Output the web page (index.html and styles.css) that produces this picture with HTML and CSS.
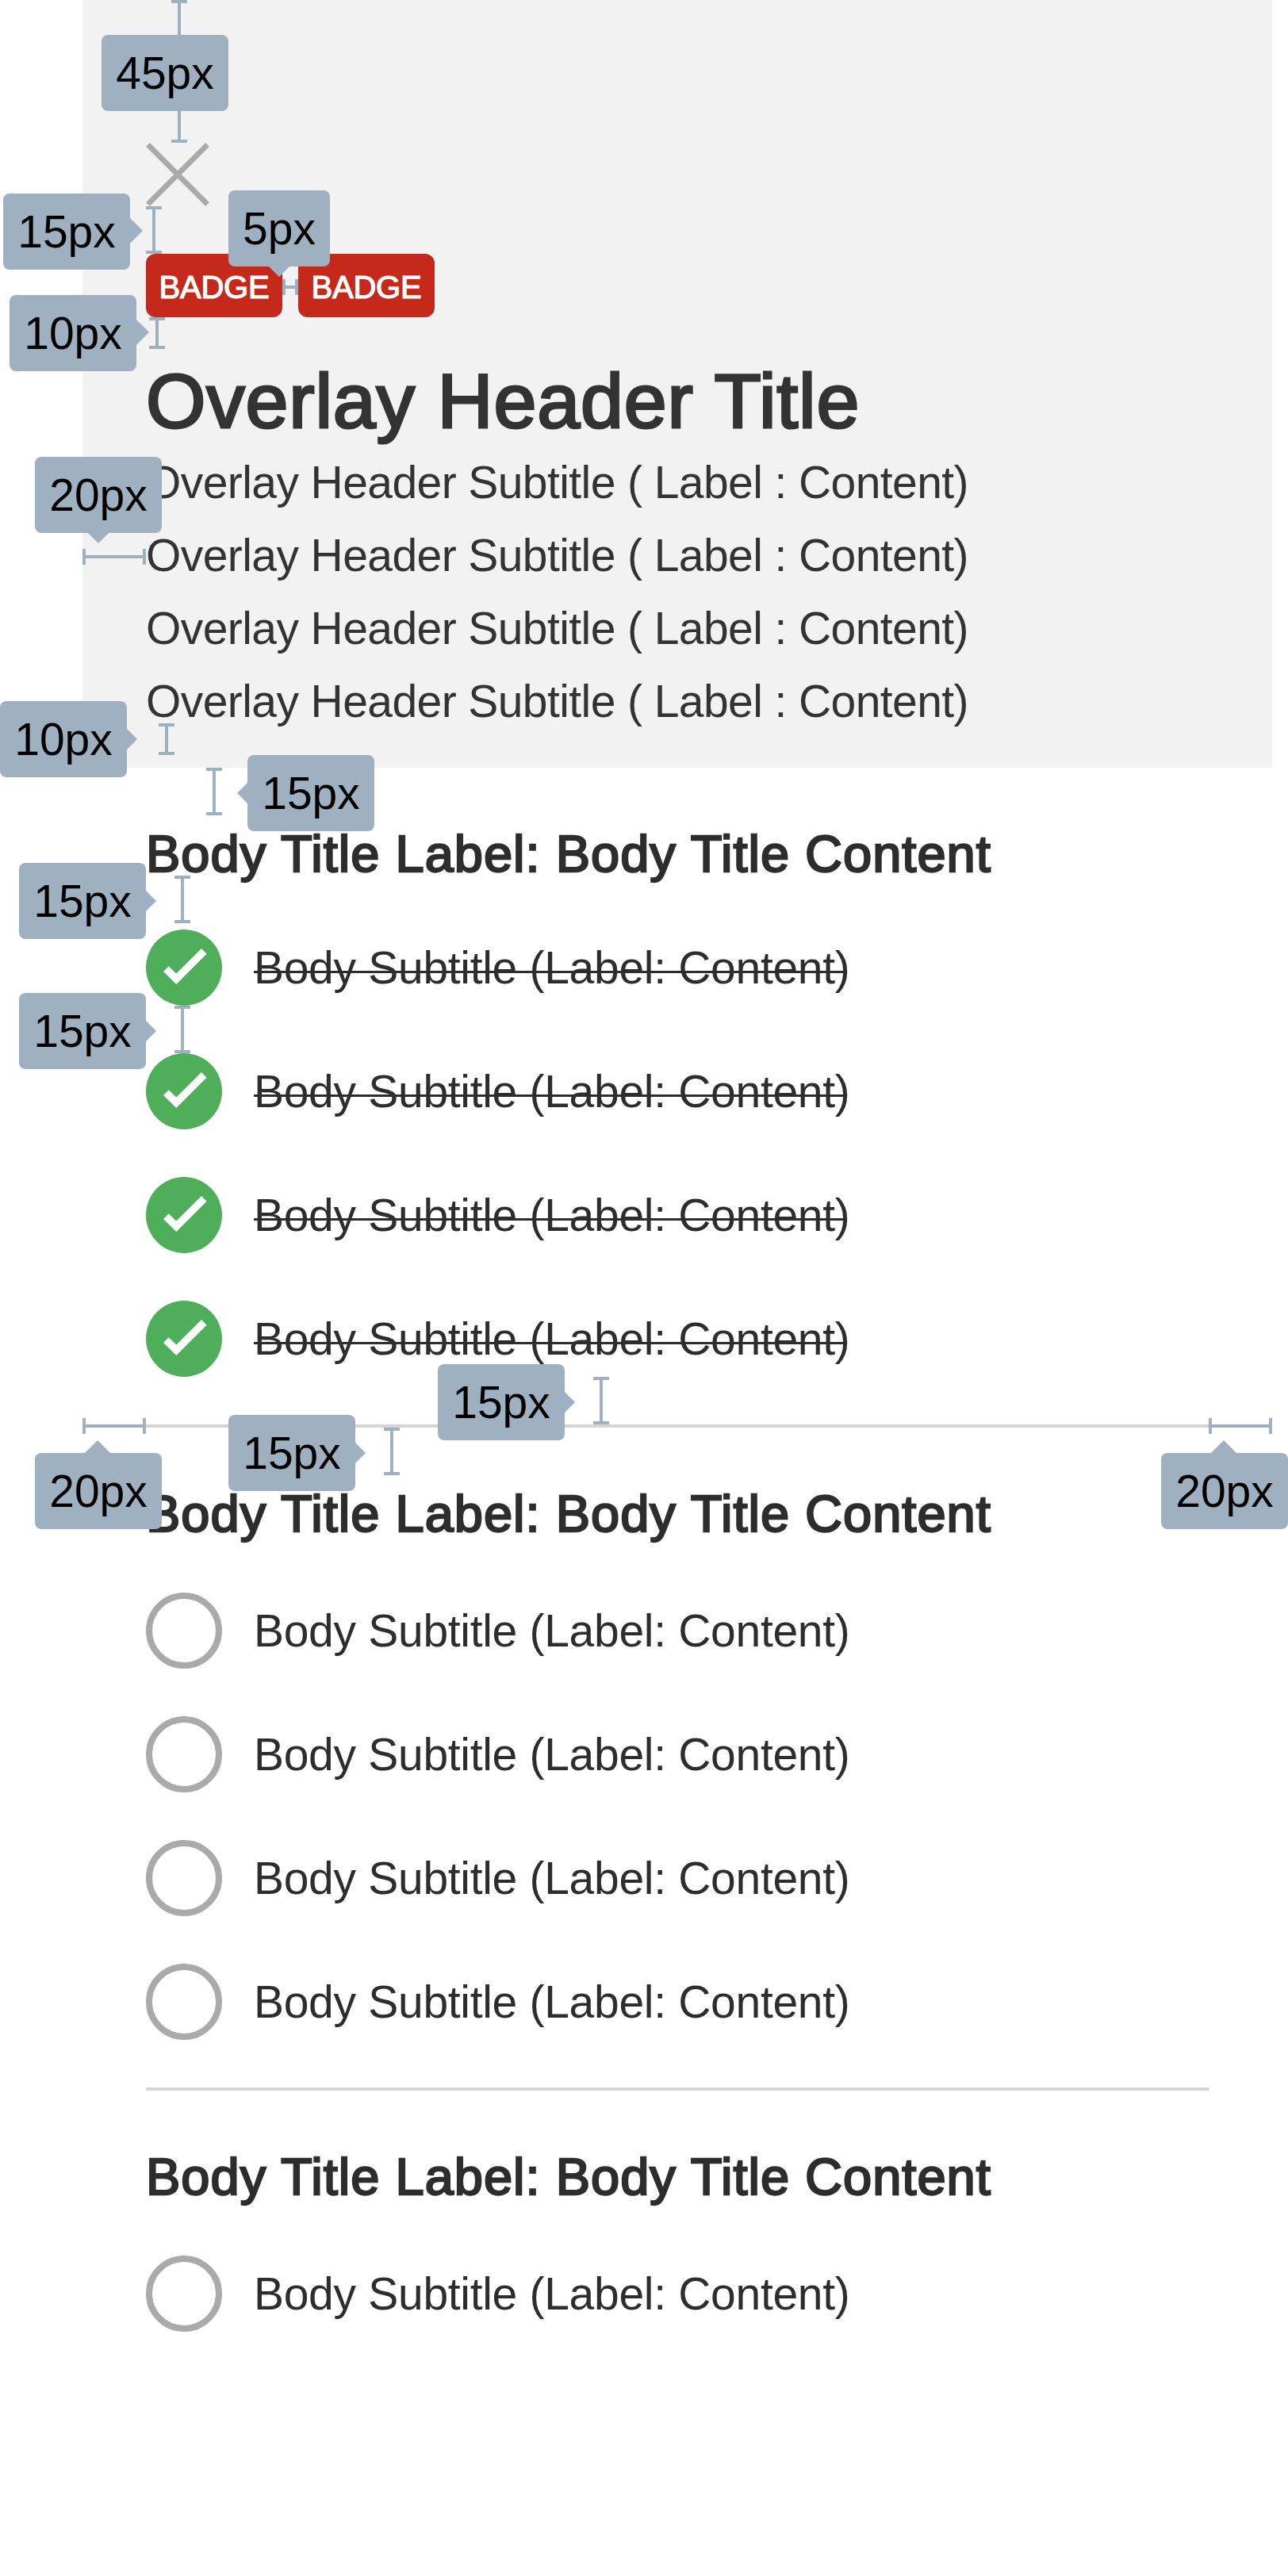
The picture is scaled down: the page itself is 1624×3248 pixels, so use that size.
FILE: index.html
```
<!DOCTYPE html>
<html lang="en">
<head>
<meta charset="utf-8">
<title>Overlay spacing</title>
<link rel="stylesheet" href="styles.css">
</head>
<body>
<main class="overlay">
  <header class="header">
    <svg class="close" viewBox="0 0 80 80"><path d="M2.4 2.4 77.6 77.6M77.6 2.4 2.4 77.6"/></svg>
    <div class="badges"><span class="badge">BADGE</span><span class="badge">BADGE</span></div>
    <h1 class="title">Overlay Header Title</h1>
    <div class="subtitles">
      <p>Overlay Header Subtitle ( Label : Content)</p>
      <p>Overlay Header Subtitle ( Label : Content)</p>
      <p>Overlay Header Subtitle ( Label : Content)</p>
      <p>Overlay Header Subtitle ( Label : Content)</p>
    </div>
  </header>

  <section class="section section-done">
    <h2 class="section-title">Body Title Label: Body Title Content</h2>
    <ul class="items">
      <li class="item done"><svg class="mark" viewBox="0 0 96 96"><circle cx="48" cy="48" r="48"/><path d="M70 24 76.6 30.7 38.3 69 22 52.9 28.7 46.3 38.3 55.6Z"/></svg><span class="text">Body Subtitle (Label: Content)</span></li>
      <li class="item done"><svg class="mark" viewBox="0 0 96 96"><circle cx="48" cy="48" r="48"/><path d="M70 24 76.6 30.7 38.3 69 22 52.9 28.7 46.3 38.3 55.6Z"/></svg><span class="text">Body Subtitle (Label: Content)</span></li>
      <li class="item done"><svg class="mark" viewBox="0 0 96 96"><circle cx="48" cy="48" r="48"/><path d="M70 24 76.6 30.7 38.3 69 22 52.9 28.7 46.3 38.3 55.6Z"/></svg><span class="text">Body Subtitle (Label: Content)</span></li>
      <li class="item done"><svg class="mark" viewBox="0 0 96 96"><circle cx="48" cy="48" r="48"/><path d="M70 24 76.6 30.7 38.3 69 22 52.9 28.7 46.3 38.3 55.6Z"/></svg><span class="text">Body Subtitle (Label: Content)</span></li>
    </ul>
  </section>

  <section class="section">
    <h2 class="section-title">Body Title Label: Body Title Content</h2>
    <ul class="items">
      <li class="item"><span class="ring"></span><span class="text">Body Subtitle (Label: Content)</span></li>
      <li class="item"><span class="ring"></span><span class="text">Body Subtitle (Label: Content)</span></li>
      <li class="item"><span class="ring"></span><span class="text">Body Subtitle (Label: Content)</span></li>
      <li class="item"><span class="ring"></span><span class="text">Body Subtitle (Label: Content)</span></li>
    </ul>
  </section>

  <section class="section">
    <h2 class="section-title">Body Title Label: Body Title Content</h2>
    <ul class="items">
      <li class="item"><span class="ring"></span><span class="text">Body Subtitle (Label: Content)</span></li>
    </ul>
  </section>
</main>

<!-- Spacing callouts laid over the overlay -->
<div class="rule v r-top"></div>
<div class="rule v r-close"></div>
<div class="rule h r-badge-gap"></div>
<div class="rule v r-badge"></div>
<div class="rule h r-header-side"></div>
<div class="rule v r-header-end"></div>
<div class="rule v r-body-top"></div>
<div class="rule v r-body-title"></div>
<div class="rule v r-item"></div>
<div class="rule v r-before-line"></div>
<div class="rule v r-after-line"></div>
<div class="rule h r-line-left"></div>
<div class="rule h r-line-right"></div>

<div class="tag t-top">45px</div>
<div class="tag right big t-close">15px</div>
<div class="tag down short t-badge-gap">5px</div>
<div class="tag right big t-badge">10px</div>
<div class="tag down t-header-side">20px</div>
<div class="tag right t-header-end">10px</div>
<div class="tag left t-body-top">15px</div>
<div class="tag right t-body-title">15px</div>
<div class="tag right t-item">15px</div>
<div class="tag right t-before-line">15px</div>
<div class="tag right t-after-line">15px</div>
<div class="tag up big t-line-left">20px</div>
<div class="tag up big t-line-right">20px</div>
</body>
</html>
```
FILE: styles.css
```
* { box-sizing: border-box; margin: 0; padding: 0; }

body {
  position: relative;
  width: 1624px;
  height: 3248px;
  overflow: hidden;
  background: #fff;
  color: #2d2d2d;
  font-family: "Liberation Sans", Arial, sans-serif;
}

.overlay { width: 1500px; margin-left: 104px; }

.header {
  height: 968px;
  padding: 180px 80px 0;
  background: #f2f2f2;
  color: #333;
}

.close { display: block; width: 80px; height: 80px; fill: none; stroke: #aaa; stroke-width: 6.8; }

.badges { display: flex; gap: 20px; margin-top: 60px; }

.badge {
  width: 172px;
  height: 80px;
  border-radius: 12px;
  background: #c5291b;
  color: #fff;
  font-size: 40px;
  line-height: 84px;
  letter-spacing: -0.2px;
  text-align: center;
  -webkit-text-stroke: 1.2px #fff;
}

.title {
  margin-top: 52px;
  font-size: 97px;
  font-weight: 400;
  line-height: 108px;
  letter-spacing: 0.8px;
  white-space: nowrap;
  -webkit-text-stroke: 3px #333;
}

.subtitles { margin-top: 2px; font-size: 57px; line-height: 92px; letter-spacing: -0.58px; white-space: nowrap; }

.section { margin: 0 80px; padding: 69px 0 60px; border-bottom: 4px solid #d4d4d4; }
.section:last-child { border-bottom: 0; }

.section-title {
  font-size: 65px;
  font-weight: 400;
  line-height: 80px;
  letter-spacing: 1px;
  white-space: nowrap;
  -webkit-text-stroke: 2.4px #2d2d2d;
}

.items { display: flex; flex-direction: column; gap: 60px; margin-top: 59px; list-style: none; }
.section-done .items { margin-top: 55px; }

.item { display: flex; gap: 40px; height: 96px; font-size: 57px; line-height: 96px; letter-spacing: -0.3px; white-space: nowrap; }
.mark { width: 96px; height: 96px; fill: #4fae5a; }
.mark path { fill: #fff; }
.ring { width: 96px; height: 96px; border: 8px solid #aaa; border-radius: 50%; }

.done .text { position: relative; }
.done .text::after { content: ""; position: absolute; left: 0; right: 3px; top: 52px; height: 3px; background: #2d2d2d; }

/* Measuring rules */
.rule { position: absolute; }
.rule::before { content: ""; position: absolute; background: #9fb1c1; }
.v { width: 20px; border: solid #9fb1c1; border-width: 4px 0; }
.v::before { left: 8px; top: 0; bottom: 0; width: 4px; }
.h { height: 20px; border: solid #9fb1c1; border-width: 0 4px; }
.h::before { left: 0; right: 0; top: 8px; height: 4px; }

.r-top { left: 216px; top: 0; height: 180px; }
.r-close { left: 184px; top: 260px; height: 60px; }
.r-badge-gap { left: 356px; top: 352px; width: 20px; }
.r-badge { left: 188px; top: 400px; height: 40px; }
.r-header-side { left: 104px; top: 692px; width: 80px; }
.r-header-end { left: 200px; top: 912px; height: 40px; }
.r-body-top { left: 260px; top: 968px; height: 60px; }
.r-body-title { left: 220px; top: 1104px; height: 60px; }
.r-item { left: 220px; top: 1268px; height: 60px; }
.r-before-line { left: 748px; top: 1736px; height: 60px; }
.r-after-line { left: 484px; top: 1800px; height: 60px; }
.r-line-left { left: 104px; top: 1788px; width: 80px; }
.r-line-right { left: 1524px; top: 1788px; width: 80px; }

/* Value tags */
.tag {
  --tip: 13px;
  position: absolute;
  width: 160px;
  height: 96px;
  border-radius: 8px;
  background: #9fb1c1;
  color: #000;
  font-size: 57px;
  line-height: 96px;
  text-align: center;
}
.short { width: 128px; }
.big { --tip: 16.6px; }
.tag::after { position: absolute; border: var(--tip) solid transparent; }
.right::after { content: ""; left: 100%; top: calc(50% - var(--tip)); border-right: 0; border-left-color: #9fb1c1; }
.left::after { content: ""; right: 100%; top: calc(50% - var(--tip)); border-left: 0; border-right-color: #9fb1c1; }
.down::after { content: ""; top: 100%; left: calc(50% - var(--tip)); border-bottom: 0; border-top-color: #9fb1c1; }
.up::after { content: ""; bottom: 100%; left: calc(50% - var(--tip)); border-top: 0; border-bottom-color: #9fb1c1; }

.t-top { left: 128px; top: 44px; }
.t-close { left: 4px; top: 244px; }
.t-badge-gap { left: 288px; top: 240px; }
.t-badge { left: 12px; top: 372px; }
.t-header-side { left: 44px; top: 576px; }
.t-header-end { left: 0; top: 884px; }
.t-body-top { left: 312px; top: 952px; }
.t-body-title { left: 24px; top: 1088px; }
.t-item { left: 24px; top: 1252px; }
.t-before-line { left: 552px; top: 1720px; }
.t-after-line { left: 288px; top: 1784px; }
.t-line-left { left: 44px; top: 1832px; }
.t-line-right { left: 1464px; top: 1832px; }
```
